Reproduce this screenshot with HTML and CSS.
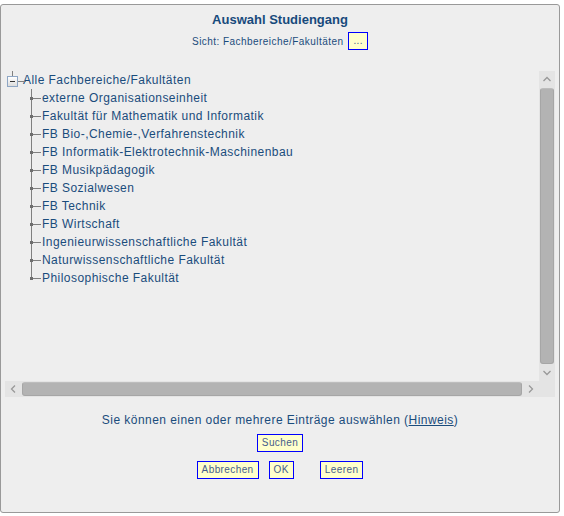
FILE: index.html
```html
<!DOCTYPE html>
<html lang="de">
<head>
    <meta charset="UTF-8">
    <title>Auswahl Studiengang</title>
    <link rel="stylesheet" href="styles.css">
</head>
<body>
    <div class="dialog">
        <h1>Auswahl Studiengang</h1>
        <div class="view-row">
            <span>Sicht: Fachbereiche/Fakultäten</span>
            <button class="btn">...</button>
        </div>

        <div class="tree-box">
            <div class="tree">
                <div class="tree-root">
                    <span class="toggle"></span>
                    <span class="label">Alle Fachbereiche/Fakultäten</span>
                </div>
                <ul class="tree-children">
                    <li>externe Organisationseinheit</li>
                    <li>Fakultät für Mathematik und Informatik</li>
                    <li>FB Bio-,Chemie-,Verfahrenstechnik</li>
                    <li>FB Informatik-Elektrotechnik-Maschinenbau</li>
                    <li>FB Musikpädagogik</li>
                    <li>FB Sozialwesen</li>
                    <li>FB Technik</li>
                    <li>FB Wirtschaft</li>
                    <li>Ingenieurwissenschaftliche Fakultät</li>
                    <li>Naturwissenschaftliche Fakultät</li>
                    <li>Philosophische Fakultät</li>
                </ul>
            </div>

            <!-- scrollbars -->
            <div class="scrollbar vertical">
                <span class="arrow">
                    <svg width="16" height="16" viewBox="0 0 16 16"><path d="M4.5 10 L8 6.5 L11.5 10" fill="none" stroke="#999" stroke-width="1.3"/></svg>
                </span>
                <span class="thumb"></span>
                <span class="arrow">
                    <svg width="16" height="16" viewBox="0 0 16 16"><path d="M4.5 6 L8 9.5 L11.5 6" fill="none" stroke="#999" stroke-width="1.3"/></svg>
                </span>
            </div>
            <div class="scrollbar horizontal">
                <span class="arrow">
                    <svg width="16" height="16" viewBox="0 0 16 16"><path d="M10 4.5 L6.5 8 L10 11.5" fill="none" stroke="#999" stroke-width="1.3"/></svg>
                </span>
                <span class="thumb"></span>
                <span class="arrow">
                    <svg width="16" height="16" viewBox="0 0 16 16"><path d="M6 4.5 L9.5 8 L6 11.5" fill="none" stroke="#999" stroke-width="1.3"/></svg>
                </span>
            </div>
            <div class="scroll-corner"></div>
        </div>

        <p class="hint">Sie können einen oder mehrere Einträge auswählen (<a href="#">Hinweis</a>)</p>

        <div class="actions">
            <button class="btn">Suchen</button>
        </div>
        <div class="actions">
            <button class="btn">Abbrechen</button>
            <button class="btn">OK</button>
            <button class="btn btn-clear">Leeren</button>
        </div>
    </div>
</body>
</html>
```

FILE: styles.css
```css
body {
    margin: 0;
    padding: 4px 0 0;
    background-color: white;
    font-family: "Liberation Sans", Arial, sans-serif;
    color: #1a4c7c;
}

.dialog {
    box-sizing: border-box;
    width: 560px;
    height: 509px;
    padding: 7px 0 0;
    background-color: #eeeeee;
    border: 1px solid #999;
    border-radius: 3px;
}

h1 {
    margin: 0;
    font-size: 13px;
    line-height: 16px;
    text-align: center;
    color: #174a7c;
}

.view-row {
    display: flex;
    justify-content: center;
    align-items: center;
    gap: 5px;
    margin-top: 4px;
    font-size: 10px;
    letter-spacing: 0.45px;
}

.btn {
    height: 18px;
    padding: 0 4px;
    background-color: #ffffcc;
    border: 1px solid #0000ff;
    border-radius: 0;
    font-family: "Liberation Sans", Arial, sans-serif;
    font-size: 10px;
    letter-spacing: 0.4px;
    line-height: 16px;
    color: #465d8c;
    cursor: pointer;
}

/* tree */

.tree-box {
    display: grid;
    grid-template-columns: 1fr 16px;
    grid-template-rows: 1fr 16px;
    height: 326px;
    margin: 21px 4px 0 4px;
}

.tree {
    overflow: hidden;
    font-size: 12px;
    letter-spacing: 0.45px;
    line-height: 18px;
}

.tree-root {
    display: flex;
    align-items: center;
    height: 18px;
    padding-left: 2px;
}

.toggle {
    position: relative;
    box-sizing: border-box;
    width: 11px;
    height: 11px;
    margin-top: 3px;
    border: 1px solid #8ea6c4;
    background: linear-gradient(#ffffff, #dcdcdc);
}

.toggle::before {
    content: "";
    position: absolute;
    left: 4px;
    top: -6px;
    width: 1px;
    height: 5px;
    background-color: #808080;
}

.toggle::after {
    content: "";
    position: absolute;
    left: 2px;
    top: 4px;
    width: 5px;
    height: 1px;
    background-color: #333;
    box-shadow: 8px 0 0 #808080, 11px 0 0 #808080;
}

.label {
    margin-left: 5px;
}

.tree-children {
    position: relative;
    margin: 0 0 0 26px;
    padding: 0;
    list-style: none;
}

.tree-children::before {
    content: "";
    position: absolute;
    left: 0;
    top: 0;
    bottom: 9px;
    width: 1px;
    background-color: #808080;
}

.tree-children li {
    position: relative;
    height: 18px;
    padding-left: 11px;
    white-space: nowrap;
}

.tree-children li::before {
    content: "";
    position: absolute;
    left: 0;
    top: 9px;
    width: 10px;
    height: 1px;
    background-color: #808080;
}

.tree-children li::after {
    content: "";
    position: absolute;
    left: -1px;
    top: 8px;
    width: 3px;
    height: 3px;
    background-color: #6e6e6e;
}

.scrollbar {
    display: flex;
    background-color: #e4e4e4;
}

.scrollbar.vertical {
    flex-direction: column;
}

.scrollbar .arrow {
    display: block;
    width: 16px;
    height: 16px;
    flex: none;
}

.scrollbar .arrow svg {
    display: block;
}

.scrollbar .thumb {
    flex: 1;
    background-color: #b3b3b3;
    border: 1px solid #a6a6a6;
    border-top-color: #bdbdbd;
    border-radius: 3px;
}

.scrollbar.vertical .thumb {
    margin: 1px 1px 1px 1px;
}

.scrollbar.horizontal .thumb {
    margin: 1px 1px 1px 1px;
}

.scroll-corner {
    background-color: #e4e4e4;
}

/* footer */

.hint {
    margin: 14px 0 0;
    font-size: 12px;
    letter-spacing: 0.45px;
    line-height: 18px;
    text-align: center;
}

.hint a {
    color: #1a4c7c;
}

.actions {
    display: flex;
    justify-content: center;
    gap: 10px;
    margin-top: 5px;
}

.actions + .actions {
    margin-top: 9px;
}

.btn-clear {
    margin-left: 16px;
}
```
